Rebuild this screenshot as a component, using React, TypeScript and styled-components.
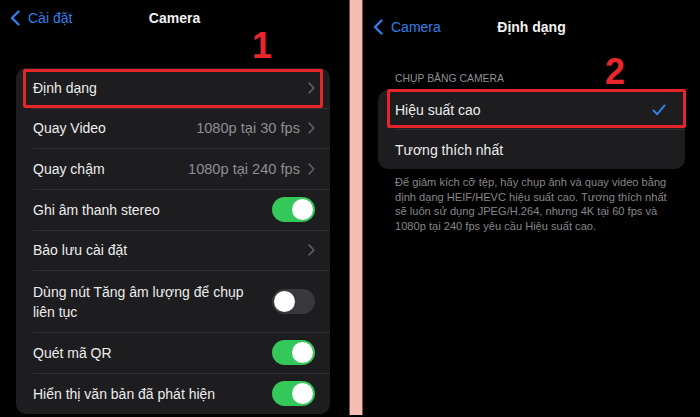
import React from "react";
import styled, { createGlobalStyle } from "styled-components";

const GlobalStyle = createGlobalStyle`
  html, body { margin: 0; padding: 0; background: #000; }
  body {
    font-family: "Liberation Sans", Arial, "Noto Sans", sans-serif;
    -webkit-font-smoothing: antialiased;
  }
  * { box-sizing: border-box; }
`;

const Screen = styled.main`
  display: flex;
  width: 700px;
  height: 417px;
  background: #000;
  overflow: hidden;
`;

const Panel = styled.section<{ $width?: number }>`
  position: relative;
  display: flex;
  flex-direction: column;
  min-width: 0;
  flex: ${(p) => (p.$width ? `0 0 ${p.$width}px` : "1 1 0")};
`;

const Divider = styled.div`
  flex: 0 0 14px;
  align-self: flex-start;
  height: 415px;
  background: #f6bdb5;
  box-shadow: inset 1px 0 0 #7a4a44, inset -1px 0 0 #7a4a44;
`;

const NavBar = styled.header<{ $top: number }>`
  display: grid;
  grid-template-columns: 1fr auto 1fr;
  align-items: center;
  height: 36px;
  margin-top: ${(p) => p.$top}px;
  padding: 0 10px;
`;

const BackLink = styled.div`
  display: flex;
  align-items: center;
  gap: 8px;
  color: #2f7fe8;
  font-size: 14px;
`;

const Title = styled.h1`
  margin: 0;
  font-size: 14px;
  font-weight: 700;
  color: #f2f2f2;
`;

const Annotation = styled.span<{ $x: number; $y: number }>`
  position: absolute;
  left: ${(p) => p.$x}px;
  top: ${(p) => p.$y}px;
  font-size: 36px;
  line-height: 1;
  font-weight: 700;
  color: #e8262b;
`;

const Card = styled.div<{ $margin: string }>`
  margin: ${(p) => p.$margin};
  background: #1d1d1f;
  border-radius: 10px;
  display: flex;
  flex-direction: column;
`;

const Row = styled.div<{ $height: number }>`
  position: relative;
  display: flex;
  height: ${(p) => p.$height}px;
  padding-left: 17px;
`;

const RowBody = styled.div<{ $last?: boolean; $pr: number }>`
  flex: 1;
  display: flex;
  align-items: center;
  gap: 8px;
  padding-right: ${(p) => p.$pr}px;
  border-bottom: ${(p) => (p.$last ? "none" : "1px solid #303032")};
`;

const Label = styled.span<{ $wrapGap?: number }>`
  flex: 1;
  font-size: 14px;
  line-height: 20px;
  color: #ececec;
  padding-right: ${(p) => p.$wrapGap ?? 0}px;
`;

const Value = styled.span`
  font-size: 14.6px;
  color: #8e8e93;
`;

const Toggle = styled.span<{ $on: boolean }>`
  position: relative;
  flex: none;
  width: 43px;
  height: 25px;
  border-radius: 13px;
  background: ${(p) => (p.$on ? "#34c759" : "#39393d")};
  &::after {
    content: "";
    position: absolute;
    top: 2px;
    left: ${(p) => (p.$on ? "20px" : "2px")};
    width: 21px;
    height: 21px;
    border-radius: 50%;
    background: #fff;
  }
`;

const Highlight = styled.div<{ $inset: string }>`
  position: absolute;
  inset: ${(p) => p.$inset};
  border: 3px solid #e5252a;
  border-radius: 2px;
  pointer-events: none;
`;

const SectionHeader = styled.div`
  margin: 28px 0 5px 32px;
  font-size: 10.4px;
  line-height: 12px;
  color: #8e8e93;
  text-transform: uppercase;
`;

const Footer = styled.p`
  margin: 6px 8px 0 32px;
  font-size: 11.1px;
  line-height: 14.7px;
  color: #86868a;
`;

const Chevron = () => (
  <svg width="7" height="12" viewBox="0 0 7 12" fill="none">
    <path d="M1.2 1.2 L5.8 6 L1.2 10.8" stroke="#5c5c60" strokeWidth="1.8" strokeLinecap="round" strokeLinejoin="round" />
  </svg>
);

const BackChevron = () => (
  <svg width="10" height="16" viewBox="0 0 10 16" fill="none">
    <path d="M8.5 1.5 L2 8 L8.5 14.5" stroke="#2f7fe8" strokeWidth="2.4" strokeLinecap="round" strokeLinejoin="round" />
  </svg>
);

const Check = () => (
  <svg width="14" height="12" viewBox="0 0 14 12" fill="none">
    <path d="M1.5 6.5 L5.2 10.2 L12.5 1.5" stroke="#2f7fe8" strokeWidth="2" strokeLinecap="round" strokeLinejoin="round" />
  </svg>
);

type Item = {
  label: string;
  value?: string;
  chevron?: boolean;
  toggle?: boolean;
  height: number;
};

const cameraItems: Item[] = [
  { label: "Định dạng", chevron: true, height: 40.5 },
  { label: "Quay Video", value: "1080p tại 30 fps", chevron: true, height: 40.5 },
  { label: "Quay chậm", value: "1080p tại 240 fps", chevron: true, height: 40.5 },
  { label: "Ghi âm thanh stereo", toggle: true, height: 41 },
  { label: "Bảo lưu cài đặt", chevron: true, height: 40.5 },
  { label: "Dùng nút Tăng âm lượng để chụp liên tục", toggle: false, height: 62 },
  { label: "Quét mã QR", toggle: true, height: 40.5 },
  { label: "Hiển thị văn bản đã phát hiện", toggle: true, height: 40.5 },
];

export default function App() {
  return (
    <>
      <GlobalStyle />
      <Screen>
        <Panel $width={349}>
          <NavBar $top={0}>
            <BackLink>
              <BackChevron />
              <span>Cài đặt</span>
            </BackLink>
            <Title>Camera</Title>
            <span />
          </NavBar>
          <Annotation $x={252} $y={28}>1</Annotation>
          <Card $margin="32px 19px 0 16px">
            {cameraItems.map((it, i) => (
              <Row key={it.label} $height={it.height}>
                {i === 0 && <Highlight $inset="1px 7px 1px 7px" />}
                <RowBody $last={i === cameraItems.length - 1} $pr={15}>
                  <Label $wrapGap={it.height > 50 ? 12 : 0}>{it.label}</Label>
                  {it.value && <Value>{it.value}</Value>}
                  {it.chevron && <Chevron />}
                  {it.toggle !== undefined && <Toggle $on={it.toggle} />}
                </RowBody>
              </Row>
            ))}
          </Card>
        </Panel>
        <Divider />
        <Panel>
          <NavBar $top={9}>
            <BackLink>
              <BackChevron />
              <span>Camera</span>
            </BackLink>
            <Title>Định dạng</Title>
            <span />
          </NavBar>
          <Annotation $x={242} $y={54}>2</Annotation>
          <SectionHeader>Chụp bằng camera</SectionHeader>
          <Card $margin="0 15px 0 15px">
            <Row $height={40}>
              <Highlight $inset="-1px -1px 2px 9px" />
              <RowBody $pr={19}>
                <Label>Hiệu suất cao</Label>
                <Check />
              </RowBody>
            </Row>
            <Row $height={39}>
              <RowBody $last $pr={19}>
                <Label>Tương thích nhất</Label>
              </RowBody>
            </Row>
          </Card>
          <Footer>
            Để giảm kích cỡ tệp, hãy chụp ảnh và quay video bằng
            <br />
            định dạng HEIF/HEVC hiệu suất cao. Tương thích nhất
            <br />
            sẽ luôn sử dụng JPEG/H.264, nhưng 4K tại 60 fps và
            <br />
            1080p tại 240 fps yêu cầu Hiệu suất cao.
          </Footer>
        </Panel>
      </Screen>
    </>
  );
}
